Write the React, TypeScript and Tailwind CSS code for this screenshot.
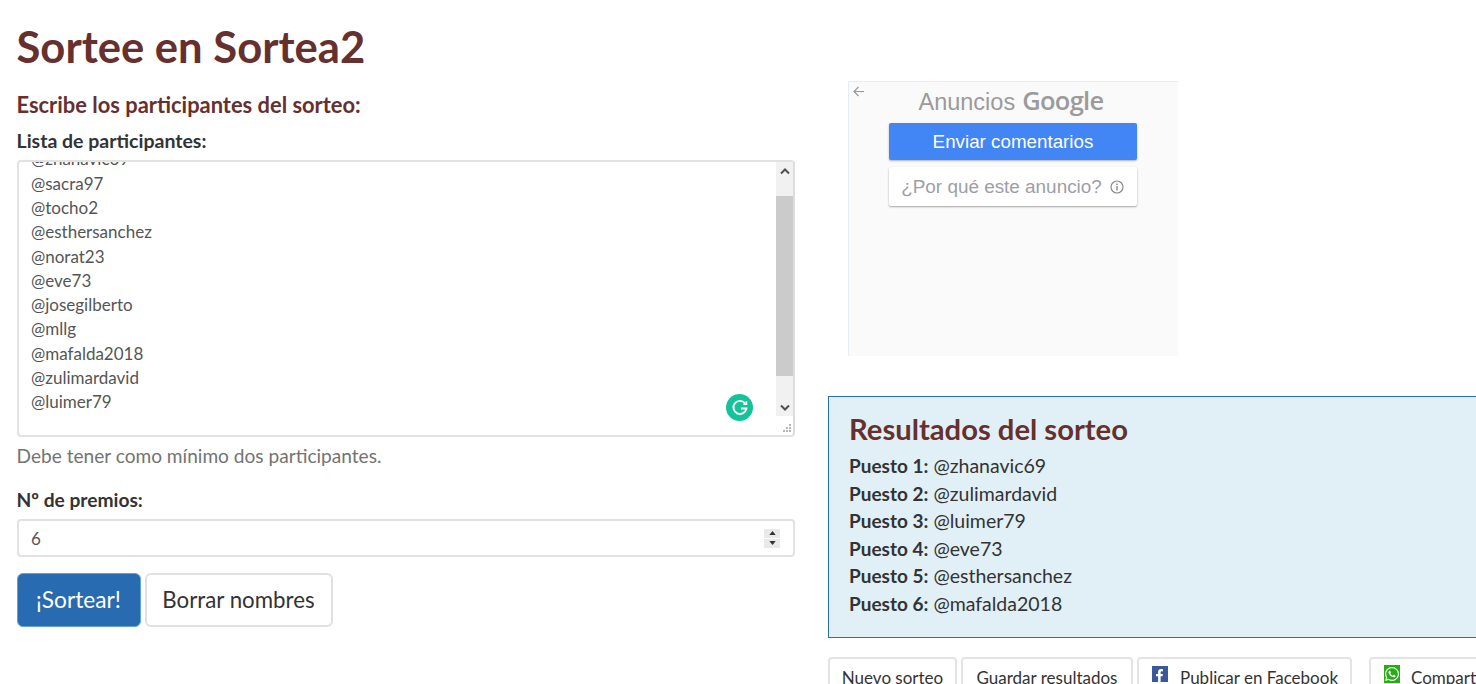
import React from 'react';
import { FaFacebookF, FaWhatsapp } from 'react-icons/fa';

const participants = [
  '@zhanavic69',
  '@sacra97',
  '@tocho2',
  '@esthersanchez',
  '@norat23',
  '@eve73',
  '@josegilberto',
  '@mllg',
  '@mafalda2018',
  '@zulimardavid',
  '@luimer79',
];

const results = ['@zhanavic69', '@zulimardavid', '@luimer79', '@eve73', '@esthersanchez', '@mafalda2018'];

const Scrollbar: React.FC = () => (
  <div className="flex w-[17px] shrink-0 flex-col bg-[#f1f1f1]">
    <div className="flex h-[34px] items-start justify-center pt-[6px]">
      <svg width="10" height="7" viewBox="0 0 10 7">
        <path d="M1 5.5 L5 1.5 L9 5.5" fill="none" stroke="#505050" strokeWidth="2" />
      </svg>
    </div>
    <div className="h-[180px] bg-[#cbcbcb]" />
    <div className="flex h-[40px] items-end justify-center pb-[5px]">
      <svg width="10" height="7" viewBox="0 0 10 7">
        <path d="M1 1.5 L5 5.5 L9 1.5" fill="none" stroke="#505050" strokeWidth="2" />
      </svg>
    </div>
  </div>
);

const ParticipantsBox: React.FC = () => (
  <div className="relative flex h-[277px] overflow-hidden rounded-[4px] border-2 border-[#e2e2e2] border-r-[#dcdcdc]">
    <div className="flex-1 overflow-hidden pl-[12.5px] pt-[1px]">
      <div className="mt-[-15.6px] text-[17px] leading-[24.28px] text-[#555555]">
        {participants.map((name) => (
          <div key={name}>{name}</div>
        ))}
      </div>
    </div>
    <div className="flex flex-col">
      <Scrollbar />
    </div>
    <div className="absolute right-[40px] bottom-[14px] flex h-[27px] w-[27px] items-center justify-center rounded-full bg-[#15c39a]">
      <svg width="20" height="20" viewBox="0 0 19 19">
        <path
          d="M14.6 5.4 A6.2 6.2 0 1 0 15.6 10 H10.4"
          fill="none"
          stroke="#ffffff"
          strokeWidth="1.8"
        />
        <path d="M12.8 5.8 H15.6 V3" fill="none" stroke="#ffffff" strokeWidth="1.6" />
      </svg>
    </div>
    <svg className="absolute right-[1px] bottom-[1px]" width="11" height="11" viewBox="0 0 11 11" fill="#b5b5b5">
      <rect x="8" y="1" width="2" height="2" />
      <rect x="5" y="4" width="2" height="2" />
      <rect x="8" y="4" width="2" height="2" />
      <rect x="2" y="7" width="2" height="2" />
      <rect x="5" y="7" width="2" height="2" />
      <rect x="8" y="7" width="2" height="2" />
    </svg>
  </div>
);

const AdPanel: React.FC = () => (
  <div className="ml-[20px] flex h-[275px] w-[330px] flex-col items-center border-t border-l border-t-[#ececec] border-l-[#e3eef2] bg-[#fafafa] pr-[1px] font-['Liberation_Sans',sans-serif]">
    <div className="relative flex h-[41px] w-full items-center justify-center pr-[4px]">
      <svg className="absolute top-[3px] left-[3px]" width="13" height="13" viewBox="0 0 13 13">
        <path d="M12 6.5 H2 M6.5 2 L2 6.5 L6.5 11" fill="none" stroke="#9a9a9a" strokeWidth="1.2" />
      </svg>
      <span className="text-[23.5px] leading-none text-[#9a9a9a]">Anuncios</span>
      <span className="mb-[3px] ml-[7px] font-['Open_Sans',sans-serif] text-[25.5px] leading-none font-semibold tracking-[-0.7px] text-[#9b9b9b]">
        Google
      </span>
    </div>
    <div className="flex h-[37px] w-[248px] items-center justify-center rounded-[2px] bg-[#4285f4] pt-[1px] text-[18.8px] text-white shadow-[0_1px_2px_rgba(0,0,0,0.3)]">
      Enviar comentarios
    </div>
    <div className="mt-[7px] flex h-[39px] w-[248px] items-center justify-center gap-[8px] rounded-[2px] bg-white pt-[1px] pr-[1px] text-[18.9px] text-[#9e9ea6] shadow-[0_1px_2px_rgba(0,0,0,0.35)]">
      <span>¿Por qué este anuncio?</span>
      <svg width="14" height="14" viewBox="0 0 14 14">
        <circle cx="7" cy="7" r="6" fill="none" stroke="#8a8a8a" strokeWidth="1.2" />
        <path d="M7 6 V10.5 M7 3.4 V5" stroke="#8a8a8a" strokeWidth="1.4" />
      </svg>
    </div>
  </div>
);

const ActionButton: React.FC<{ className?: string; children: React.ReactNode }> = ({ className, children }) => (
  <button className={`flex h-[42px] shrink-0 items-start rounded-[4px] border-2 border-[#e4e4e4] bg-white pt-[6px] text-[17px] whitespace-nowrap text-[#333333] ${className ?? ''}`}>
    {children}
  </button>
);

export default function App() {
  return (
    <div className="h-[684px] w-[1476px] overflow-hidden bg-white font-['Lato',sans-serif] text-[#333333]">
      <div className="flex w-[1700px] pl-[16.5px]">
        <div className="w-[778.5px] shrink-0">
          <h1 className="mt-[21px] text-[43.6px] leading-[50px] font-bold text-[#66302f]">Sortee en Sortea2</h1>
          <h2 className="mt-[22px] text-[21.9px] leading-[24px] font-bold text-[#66302f]">
            Escribe los participantes del sorteo:
          </h2>
          <label className="mt-[12px] block text-[19.5px] leading-[24px] font-bold">Lista de participantes:</label>
          <div className="mt-[7px]">
            <ParticipantsBox />
          </div>
          <p className="mt-[6px] text-[19.1px] leading-[25px] text-[#737373]">Debe tener como mínimo dos participantes.</p>
          <label className="mt-[20px] block text-[19.2px] leading-[24px] font-bold">Nº de premios:</label>
          <div className="mt-[7px] flex h-[38px] items-center justify-between rounded-[4px] border-2 border-[#e2e2e2] pr-[13px] pl-[12.5px] text-[17px] text-[#555555]">
            <span className="pt-[1px]">6</span>
            <div className="flex h-[19px] w-[16px] flex-col gap-[1px]">
              <div className="flex flex-1 items-center justify-center bg-[#e9e9e9]">
                <svg width="7" height="4" viewBox="0 0 8 5"><path d="M4 0 L8 5 H0 Z" fill="#333333" /></svg>
              </div>
              <div className="flex flex-1 items-center justify-center bg-[#e9e9e9]">
                <svg width="7" height="4" viewBox="0 0 8 5"><path d="M0 0 H8 L4 5 Z" fill="#333333" /></svg>
              </div>
            </div>
          </div>
          <div className="mt-[16px] flex gap-[4px] text-[22.3px]">
            <button className="h-[54px] w-[124px] rounded-[6px] border border-[#5fa6c9] bg-[#286bb0] text-[22.7px] text-white">¡Sortear!</button>
            <button className="h-[54px] w-[188px] rounded-[6px] border-2 border-[#e0e0e0] bg-white text-[#333333]">Borrar nombres</button>
          </div>
        </div>

        <div className="ml-[33px] w-[860px] shrink-0 pt-[81px]">
          <AdPanel />
          <div className="mt-[40px] h-[242px] border border-[#2a6db0] bg-[#e1f0f6] pt-[14px] pl-[20px]">
            <h2 className="text-[29.2px] leading-[36px] font-bold text-[#66302f]">Resultados del sorteo</h2>
            <ul className="mt-[5px] text-[19.5px] leading-[27.6px]">
              {results.map((name, i) => (
                <li key={name}>
                  <b className="text-[19px]">Puesto {i + 1}:</b> {name}
                </li>
              ))}
            </ul>
          </div>
          <div className="mt-[19px] flex">
            <ActionButton className="w-[129px] justify-center">Nuevo sorteo</ActionButton>
            <ActionButton className="ml-[4px] w-[172px] justify-center">Guardar resultados</ActionButton>
            <ActionButton className="ml-[4px] w-[215px] pl-[13px]">
              <span className="mt-[1px] flex h-[16px] w-[16px] items-end justify-end bg-[#3b5998] pr-[2px] text-white">
                <FaFacebookF size={13} />
              </span>
              <span className="ml-[12px]">Publicar en Facebook</span>
            </ActionButton>
            <ActionButton className="ml-[17px] w-[200px] pl-[13px]">
              <span className="flex h-[18px] w-[18px] items-center justify-center bg-[#22b011] text-white">
                <FaWhatsapp size={16} />
              </span>
              <span className="ml-[11px]">Compartir en WhatsApp</span>
            </ActionButton>
          </div>
        </div>
      </div>
    </div>
  );
}
